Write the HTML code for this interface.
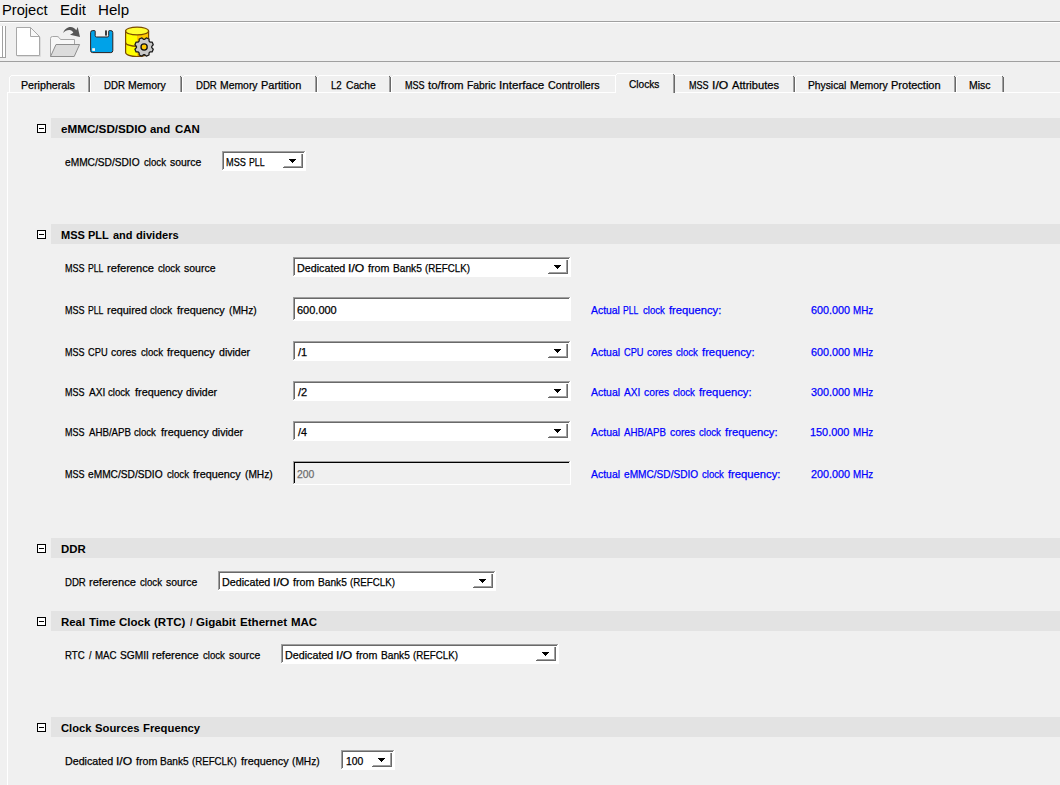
<!DOCTYPE html>
<html><head><meta charset="utf-8"><title>Clocks</title><style>
html,body{margin:0;padding:0}
body{width:1060px;height:785px;background:#f0f0f0;position:relative;overflow:hidden;font-family:"Liberation Sans",sans-serif;color:#000}
div,span,svg{position:absolute}
.tx{left:0;top:0}
.tx span{white-space:pre;transform-origin:0 0;display:block}
.r{-webkit-text-stroke:0.25px}
.m{font:14.5px/18px "Liberation Sans",sans-serif;}
.r{font:11px/13px "Liberation Sans",sans-serif;}
.b{font:bold 11px/13px "Liberation Sans",sans-serif;}
.band{left:51px;width:1009px;height:20px;background:#e3e3e3}
.exp{left:37px;width:7px;height:7px;border:1px solid #000;background:#fff}
.exp i{position:absolute;left:1px;top:3px;width:5px;height:1px;background:#000}
.cb,.tf{box-sizing:border-box;background:
 linear-gradient(#a0a0a0,#a0a0a0) 0 0/calc(100% - 1px) 1px no-repeat,
 linear-gradient(#a0a0a0,#a0a0a0) 0 0/1px calc(100% - 1px) no-repeat,
 linear-gradient(var(--in),var(--in)) 1px 1px/calc(100% - 3px) 1px no-repeat,
 linear-gradient(var(--in),var(--in)) 1px 1px/1px calc(100% - 3px) no-repeat,
 linear-gradient(var(--hl),var(--hl)) 100% 0/1px 100% no-repeat,
 linear-gradient(var(--hl),var(--hl)) 0 100%/100% 1px no-repeat,
 var(--bg);--in:#696969;--bg:#fff;--hl:#fff}
.cb{height:20px}
.tf{height:24px}
.tf.dis{--in:#000;--bg:#f0f0f0}
.cb u{position:absolute;right:3px;top:2px;width:20px;height:15px;background:
 linear-gradient(#696969,#696969) 100% 1px/1px 14px no-repeat,
 linear-gradient(#696969,#696969) 0 100%/100% 1px no-repeat,
 linear-gradient(#a0a0a0,#a0a0a0) 18px 1px/1px 13px no-repeat,
 linear-gradient(#a0a0a0,#a0a0a0) 1px 13px/18px 1px no-repeat}
.cb u::after{content:"";position:absolute;left:6px;top:6px;width:7px;height:4px;background:
 linear-gradient(#000,#000) 0 0/7px 1px no-repeat,
 linear-gradient(#000,#000) 1px 1px/5px 1px no-repeat,
 linear-gradient(#000,#000) 2px 2px/3px 1px no-repeat,
 linear-gradient(#000,#000) 3px 3px/1px 1px no-repeat}
.tab{top:75px;height:17px}
.tab b{position:absolute;background:#fff}
.tab s{position:absolute;}
</style></head><body>
<div style="left:0;top:21px;width:1060px;height:1px;background:#a0a0a0"></div>
<div style="left:0;top:22px;width:1060px;height:1px;background:#fff"></div>
<div style="left:0;top:61px;width:1060px;height:1px;background:#a0a0a0"></div>
<div style="left:0;top:26px;width:3px;height:32px;background:#fff;box-sizing:border-box;border-right:1px solid #a0a0a0;border-bottom:1px solid #a0a0a0"></div>
<div style="left:3px;top:26px;width:3px;height:32px;background:#fff;box-sizing:border-box;border-right:1px solid #a0a0a0;border-bottom:1px solid #a0a0a0"></div>
<svg style="left:0;top:0" width="170" height="62" viewBox="0 0 170 62">
<defs><linearGradient id="dbg" x1="0" x2="1" y1="0" y2="0"><stop offset="0" stop-color="#ffff00"/><stop offset="0.5" stop-color="#ffff00"/><stop offset="0.5" stop-color="#ffc800"/><stop offset="1" stop-color="#ffc800"/></linearGradient></defs>
<g fill="none" stroke-linejoin="round">
<path d="M17.5,28.5H31.5L40.5,37.5V56.5H17.5Z" stroke="#dcdcdc" stroke-linejoin="miter"/>
<path d="M16.5,27.5H30.5L39.5,36.5V55.5H16.5Z" fill="#fff" stroke="#a8a8a8" stroke-linejoin="miter"/>
<path d="M30.5,27.5V36.5H39.5Z" fill="#f9f9f9" stroke="#a8a8a8" stroke-linejoin="miter"/>
<path d="M50.5,56.5V38.5Q50.5,36.5 52.5,36.5H57Q58.2,36.5 59,37.5L60.5,39.5H74.5V44.5" fill="#f7f7f7" stroke="#a6a6a6"/>
<path d="M50.5,56.5L56,44.5H79.6L74.2,56.5Z" fill="#dcdcdc" stroke="#8e8e8e"/>
<path d="M63.1,32.9C64.4,29.6 67.4,26.9 70.6,27C73,27.1 75,28.4 76.3,30.2L77.7,27L80,37L70,34.7L73.3,32.7C72.5,31.1 71,30.1 69.5,30C67,29.9 64.8,31.2 63.1,32.9Z" fill="#565656" stroke="none"/>
<path d="M92.6,30.6H94.6Q95.2,30.6 95.2,31.2V35.6Q95.2,37 96.6,37H107.3Q108.7,37 108.7,35.6V31.2Q108.7,30.6 109.3,30.6H110.8Q112.8,30.6 112.8,32.6V50.6Q112.8,52.6 110.8,52.6H92.6Q90.6,52.6 90.6,50.6V32.6Q90.6,30.6 92.6,30.6Z" fill="#00a2e8" stroke="#2a2020" stroke-width="1"/>
<rect x="105.2" y="30.4" width="1.6" height="5.2" fill="#111" stroke="none"/>
<rect x="92.2" y="48.2" width="2.8" height="2.7" fill="#fff4ee" stroke="none"/>
<path d="M125.6,31V52.6A11.5,3.9 0 0 0 148.6,52.6V31Z" fill="url(#dbg)" stroke="#7a4a00" stroke-width="1.2"/>
<path d="M125.6,42.4A11.5,3.9 0 0 0 148.6,42.4" stroke="#7a4a00" stroke-width="1.2"/>
<ellipse cx="137.1" cy="31" rx="11.5" ry="3.9" fill="#ffff30" stroke="#7a4a00" stroke-width="1.2"/>
<path d="M151.77,47.66 L153.24,49.19 L152.11,51.91 L149.99,51.95 L149.05,52.89 L149.01,55.01 L146.29,56.14 L144.76,54.67 L143.44,54.67 L141.91,56.14 L139.19,55.01 L139.15,52.89 L138.21,51.95 L136.09,51.91 L134.96,49.19 L136.43,47.66 L136.43,46.34 L134.96,44.81 L136.09,42.09 L138.21,42.05 L139.15,41.11 L139.19,38.99 L141.91,37.86 L143.44,39.33 L144.76,39.33 L146.29,37.86 L149.01,38.99 L149.05,41.11 L149.99,42.05 L152.11,42.09 L153.24,44.81 L151.77,46.34Z" fill="#c8c8c8" stroke="#1c1c1c" stroke-width="1.3"/>
<circle cx="144.1" cy="47" r="3.1" fill="#ffc800" stroke="#111" stroke-width="1.3"/>
</g></svg>
<div class="tab" style="left:9px;top:75px;width:81px;height:17px"><b style="left:0;top:2px;width:1px;height:15px"></b><b style="left:1px;top:1px;width:1px;height:1px"></b><b style="left:2px;top:0;width:77px;height:1px"></b><s style="left:79px;top:2px;width:1px;height:15px;background:#a0a0a0"></s><s style="left:80px;top:2px;width:1px;height:15px;background:#696969"></s><s style="left:79px;top:1px;width:1px;height:1px;background:#696969"></s></div>
<div class="tab" style="left:90px;top:75px;width:92px;height:17px"><b style="left:0;top:2px;width:1px;height:15px"></b><b style="left:1px;top:1px;width:1px;height:1px"></b><b style="left:2px;top:0;width:88px;height:1px"></b><s style="left:90px;top:2px;width:1px;height:15px;background:#a0a0a0"></s><s style="left:91px;top:2px;width:1px;height:15px;background:#696969"></s><s style="left:90px;top:1px;width:1px;height:1px;background:#696969"></s></div>
<div class="tab" style="left:182px;top:75px;width:135px;height:17px"><b style="left:0;top:2px;width:1px;height:15px"></b><b style="left:1px;top:1px;width:1px;height:1px"></b><b style="left:2px;top:0;width:131px;height:1px"></b><s style="left:133px;top:2px;width:1px;height:15px;background:#a0a0a0"></s><s style="left:134px;top:2px;width:1px;height:15px;background:#696969"></s><s style="left:133px;top:1px;width:1px;height:1px;background:#696969"></s></div>
<div class="tab" style="left:317px;top:75px;width:74px;height:17px"><b style="left:0;top:2px;width:1px;height:15px"></b><b style="left:1px;top:1px;width:1px;height:1px"></b><b style="left:2px;top:0;width:70px;height:1px"></b><s style="left:72px;top:2px;width:1px;height:15px;background:#a0a0a0"></s><s style="left:73px;top:2px;width:1px;height:15px;background:#696969"></s><s style="left:72px;top:1px;width:1px;height:1px;background:#696969"></s></div>
<div class="tab" style="left:391px;top:75px;width:226px;height:17px"><b style="left:0;top:2px;width:1px;height:15px"></b><b style="left:1px;top:1px;width:1px;height:1px"></b><b style="left:2px;top:0;width:222px;height:1px"></b><s style="left:224px;top:2px;width:1px;height:15px;background:#a0a0a0"></s><s style="left:225px;top:2px;width:1px;height:15px;background:#696969"></s><s style="left:224px;top:1px;width:1px;height:1px;background:#696969"></s></div>
<div class="tab" style="left:673px;top:75px;width:122px;height:17px"><b style="left:0;top:2px;width:1px;height:15px"></b><b style="left:1px;top:1px;width:1px;height:1px"></b><b style="left:2px;top:0;width:118px;height:1px"></b><s style="left:120px;top:2px;width:1px;height:15px;background:#a0a0a0"></s><s style="left:121px;top:2px;width:1px;height:15px;background:#696969"></s><s style="left:120px;top:1px;width:1px;height:1px;background:#696969"></s></div>
<div class="tab" style="left:795px;top:75px;width:161px;height:17px"><b style="left:0;top:2px;width:1px;height:15px"></b><b style="left:1px;top:1px;width:1px;height:1px"></b><b style="left:2px;top:0;width:157px;height:1px"></b><s style="left:159px;top:2px;width:1px;height:15px;background:#a0a0a0"></s><s style="left:160px;top:2px;width:1px;height:15px;background:#696969"></s><s style="left:159px;top:1px;width:1px;height:1px;background:#696969"></s></div>
<div class="tab" style="left:956px;top:75px;width:48px;height:17px"><b style="left:0;top:2px;width:1px;height:15px"></b><b style="left:1px;top:1px;width:1px;height:1px"></b><b style="left:2px;top:0;width:44px;height:1px"></b><s style="left:46px;top:2px;width:1px;height:15px;background:#a0a0a0"></s><s style="left:47px;top:2px;width:1px;height:15px;background:#696969"></s><s style="left:46px;top:1px;width:1px;height:1px;background:#696969"></s></div>
<div style="left:7px;top:92px;width:1053px;height:1px;background:#fff"></div>
<div style="left:7px;top:92px;width:1px;height:693px;background:#fff"></div>
<div style="left:615px;top:73px;width:60px;height:20px;background:#f0f0f0"></div>
<div class="tab" style="left:615px;top:73px;width:60px;height:20px"><b style="left:0;top:2px;width:1px;height:18px"></b><b style="left:1px;top:1px;width:1px;height:1px"></b><b style="left:2px;top:0;width:56px;height:1px"></b><s style="left:58px;top:2px;width:1px;height:18px;background:#a0a0a0"></s><s style="left:59px;top:2px;width:1px;height:18px;background:#696969"></s><s style="left:58px;top:1px;width:1px;height:1px;background:#696969"></s></div>
<div class="band" style="top:118px"></div>
<div class="exp" style="top:124px"><i></i></div>
<div class="band" style="top:224px"></div>
<div class="exp" style="top:230px"><i></i></div>
<div class="band" style="top:538px"></div>
<div class="exp" style="top:544px"><i></i></div>
<div class="band" style="top:611px"></div>
<div class="exp" style="top:617px"><i></i></div>
<div class="band" style="top:717px"></div>
<div class="exp" style="top:723px"><i></i></div>
<div class="cb" style="left:222px;top:151px;width:84px"><u></u></div>
<div class="cb" style="left:293px;top:257px;width:278px"><u></u></div>
<div class="cb" style="left:293px;top:341px;width:278px"><u></u></div>
<div class="cb" style="left:293px;top:381px;width:278px"><u></u></div>
<div class="cb" style="left:293px;top:421px;width:278px"><u></u></div>
<div class="cb" style="left:218px;top:571px;width:278px"><u></u></div>
<div class="cb" style="left:281px;top:644px;width:278px"><u></u></div>
<div class="cb" style="left:341px;top:750px;width:54px"><u></u></div>
<div class="tf" style="left:293px;top:297px;width:278px"></div>
<div class="tf dis" style="left:293px;top:461px;width:278px"></div>
<div class="tx"><span class="m" style="left:1.93px;top:1px;transform:scaleX(1.0126)">Project</span></div>
<div class="tx"><span class="m" style="left:59.80px;top:1px;transform:scaleX(1.0370)">Edit</span></div>
<div class="tx"><span class="m" style="left:98.00px;top:1px;transform:scaleX(1.0429)">Help</span></div>
<div class="tx"><span class="r" style="left:20.65px;top:79px;transform:scaleX(0.9692)">Peripherals</span></div>
<div class="tx"><span class="r" style="left:104.03px;top:79px;transform:scaleX(0.8773)">DDR</span> <span class="r" style="left:128.24px;top:79px;transform:scaleX(0.9503)">Memory</span></div>
<div class="tx"><span class="r" style="left:195.84px;top:79px;transform:scaleX(0.8722)">DDR</span> <span class="r" style="left:219.91px;top:79px;transform:scaleX(0.9449)">Memory</span> <span class="r" style="left:261.10px;top:79px;transform:scaleX(0.9968)">Partition</span></div>
<div class="tx"><span class="r" style="left:331.13px;top:79px;transform:scaleX(0.8772)">L2</span> <span class="r" style="left:345.63px;top:79px;transform:scaleX(0.9329)">Cache</span></div>
<div class="tx"><span class="r" style="left:404.58px;top:79px;transform:scaleX(0.8243)">MSS</span> <span class="r" style="left:428.35px;top:79px;transform:scaleX(1.0389)">to/from</span> <span class="r" style="left:466.96px;top:79px;transform:scaleX(0.9402)">Fabric</span> <span class="r" style="left:498.97px;top:79px;transform:scaleX(1.0572)">Interface</span> <span class="r" style="left:547.92px;top:79px;transform:scaleX(0.9722)">Controllers</span></div>
<div class="tx"><span class="r" style="left:629.34px;top:78px;transform:scaleX(0.9214)">Clocks</span></div>
<div class="tx"><span class="r" style="left:689.18px;top:79px;transform:scaleX(0.8244)">MSS</span> <span class="r" style="left:711.97px;top:79px;transform:scaleX(1.1061)">I/O</span> <span class="r" style="left:732.23px;top:79px;transform:scaleX(1.0140)">Attributes</span></div>
<div class="tx"><span class="r" style="left:808.48px;top:79px;transform:scaleX(0.9346)">Physical</span> <span class="r" style="left:849.91px;top:79px;transform:scaleX(0.9496)">Memory</span> <span class="r" style="left:891.31px;top:79px;transform:scaleX(1.0009)">Protection</span></div>
<div class="tx"><span class="r" style="left:969.37px;top:79px;transform:scaleX(0.9497)">Misc</span></div>
<div class="tx"><span class="b" style="left:60.90px;top:123px;transform:scaleX(1.0613)">eMMC/SD/SDIO</span> <span class="b" style="left:150.42px;top:123px;transform:scaleX(1.0364)">and</span> <span class="b" style="left:174.60px;top:123px;transform:scaleX(1.0423)">CAN</span></div>
<div class="tx"><span class="b" style="left:60.55px;top:229px;transform:scaleX(1.0018)">MSS</span> <span class="b" style="left:88.22px;top:229px;transform:scaleX(0.9979)">PLL</span> <span class="b" style="left:112.72px;top:229px;transform:scaleX(0.9959)">and</span> <span class="b" style="left:135.97px;top:229px;transform:scaleX(1.0138)">dividers</span></div>
<div class="tx"><span class="b" style="left:60.52px;top:543px;transform:scaleX(1.0374)">DDR</span></div>
<div class="tx"><span class="b" style="left:60.52px;top:616px;transform:scaleX(1.0395)">Real</span> <span class="b" style="left:88.58px;top:616px;transform:scaleX(1.0431)">Time</span> <span class="b" style="left:119.04px;top:616px;transform:scaleX(1.0467)">Clock</span> <span class="b" style="left:154.28px;top:616px;transform:scaleX(1.0463)">(RTC)</span> <span class="b" style="left:189.51px;top:616px;transform:scaleX(0.8489)">/</span> <span class="b" style="left:196.02px;top:616px;transform:scaleX(1.0510)">Gigabit</span> <span class="b" style="left:239.72px;top:616px;transform:scaleX(1.0534)">Ethernet</span> <span class="b" style="left:290.61px;top:616px;transform:scaleX(1.0421)">MAC</span></div>
<div class="tx"><span class="b" style="left:60.79px;top:722px;transform:scaleX(1.0174)">Clock</span> <span class="b" style="left:95.06px;top:722px;transform:scaleX(1.0238)">Sources</span> <span class="b" style="left:143.31px;top:722px;transform:scaleX(1.0269)">Frequency</span></div>
<div class="tx"><span class="r" style="left:65.44px;top:156px;transform:scaleX(0.9246)">eMMC/SD/SDIO</span> <span class="r" style="left:143.69px;top:156px;transform:scaleX(0.8761)">clock</span> <span class="r" style="left:169.85px;top:156px;transform:scaleX(0.9492)">source</span></div>
<div class="tx"><span class="r" style="left:64.98px;top:262px;transform:scaleX(0.8234)">MSS</span> <span class="r" style="left:88.16px;top:262px;transform:scaleX(0.7892)">PLL</span> <span class="r" style="left:107.22px;top:262px;transform:scaleX(1.0101)">reference</span> <span class="r" style="left:157.88px;top:262px;transform:scaleX(0.8795)">clock</span> <span class="r" style="left:184.13px;top:262px;transform:scaleX(0.9528)">source</span></div>
<div class="tx"><span class="r" style="left:64.98px;top:304px;transform:scaleX(0.8200)">MSS</span> <span class="r" style="left:88.07px;top:304px;transform:scaleX(0.7858)">PLL</span> <span class="r" style="left:107.07px;top:304px;transform:scaleX(0.9904)">required</span> <span class="r" style="left:150.49px;top:304px;transform:scaleX(0.8758)">clock</span> <span class="r" style="left:176.87px;top:304px;transform:scaleX(0.9876)">frequency</span> <span class="r" style="left:228.55px;top:304px;transform:scaleX(0.9248)">(MHz)</span></div>
<div class="tx"><span class="r" style="left:64.98px;top:346px;transform:scaleX(0.8205)">MSS</span> <span class="r" style="left:88.35px;top:346px;transform:scaleX(0.8440)">CPU</span> <span class="r" style="left:111.38px;top:346px;transform:scaleX(0.9416)">cores</span> <span class="r" style="left:140.51px;top:346px;transform:scaleX(0.8764)">clock</span> <span class="r" style="left:166.91px;top:346px;transform:scaleX(0.9882)">frequency</span> <span class="r" style="left:218.72px;top:346px;transform:scaleX(0.9607)">divider</span></div>
<div class="tx"><span class="r" style="left:64.98px;top:386px;transform:scaleX(0.8194)">MSS</span> <span class="r" style="left:88.75px;top:386px;transform:scaleX(0.9213)">AXI</span> <span class="r" style="left:108.35px;top:386px;transform:scaleX(0.8752)">clock</span> <span class="r" style="left:134.71px;top:386px;transform:scaleX(0.9869)">frequency</span> <span class="r" style="left:186.46px;top:386px;transform:scaleX(0.9594)">divider</span></div>
<div class="tx"><span class="r" style="left:64.98px;top:426px;transform:scaleX(0.8192)">MSS</span> <span class="r" style="left:88.74px;top:426px;transform:scaleX(0.8800)">AHB/APB</span> <span class="r" style="left:134.38px;top:426px;transform:scaleX(0.8750)">clock</span> <span class="r" style="left:160.74px;top:426px;transform:scaleX(0.9866)">frequency</span> <span class="r" style="left:212.47px;top:426px;transform:scaleX(0.9591)">divider</span></div>
<div class="tx"><span class="r" style="left:64.98px;top:468px;transform:scaleX(0.8202)">MSS</span> <span class="r" style="left:88.30px;top:468px;transform:scaleX(0.9245)">eMMC/SD/SDIO</span> <span class="r" style="left:166.56px;top:468px;transform:scaleX(0.8761)">clock</span> <span class="r" style="left:192.95px;top:468px;transform:scaleX(0.9878)">frequency</span> <span class="r" style="left:244.64px;top:468px;transform:scaleX(0.9250)">(MHz)</span></div>
<div class="tx"><span class="r" style="left:64.94px;top:576px;transform:scaleX(0.8711)">DDR</span> <span class="r" style="left:89.05px;top:576px;transform:scaleX(1.0080)">reference</span> <span class="r" style="left:139.60px;top:576px;transform:scaleX(0.8776)">clock</span> <span class="r" style="left:165.80px;top:576px;transform:scaleX(0.9507)">source</span></div>
<div class="tx"><span class="r" style="left:64.94px;top:649px;transform:scaleX(0.8729)">RTC</span> <span class="r" style="left:88.75px;top:649px;transform:scaleX(0.8021)">/</span> <span class="r" style="left:94.99px;top:649px;transform:scaleX(0.8840)">MAC</span> <span class="r" style="left:120.35px;top:649px;transform:scaleX(0.9268)">SGMII</span> <span class="r" style="left:152.13px;top:649px;transform:scaleX(1.0054)">reference</span> <span class="r" style="left:202.54px;top:649px;transform:scaleX(0.8753)">clock</span> <span class="r" style="left:228.68px;top:649px;transform:scaleX(0.9483)">source</span></div>
<div class="tx"><span class="r" style="left:64.85px;top:755px;transform:scaleX(0.9707)">Dedicated</span> <span class="r" style="left:115.68px;top:755px;transform:scaleX(1.0989)">I/O</span> <span class="r" style="left:135.69px;top:755px;transform:scaleX(0.9672)">from</span> <span class="r" style="left:160.05px;top:755px;transform:scaleX(0.9186)">Bank5</span> <span class="r" style="left:192.35px;top:755px;transform:scaleX(0.8804)">(REFCLK)</span> <span class="r" style="left:240.85px;top:755px;transform:scaleX(0.9865)">frequency</span> <span class="r" style="left:292.48px;top:755px;transform:scaleX(0.9238)">(MHz)</span></div>
<div class="tx"><span class="r" style="left:225.97px;top:156px;transform:scaleX(0.8333)">MSS</span> <span class="r" style="left:249.42px;top:156px;transform:scaleX(0.7987)">PLL</span></div>
<div class="tx"><span class="r" style="left:296.95px;top:262px;transform:scaleX(0.9755)">Dedicated</span> <span class="r" style="left:348.02px;top:262px;transform:scaleX(1.1045)">I/O</span> <span class="r" style="left:368.13px;top:262px;transform:scaleX(0.9721)">from</span> <span class="r" style="left:392.60px;top:262px;transform:scaleX(0.9232)">Bank5</span> <span class="r" style="left:425.06px;top:262px;transform:scaleX(0.8847)">(REFCLK)</span></div>
<div class="tx"><span class="r" style="left:296.55px;top:304px;transform:scaleX(0.9994)">600.000</span></div>
<div class="tx"><span class="r" style="left:298.30px;top:346px;transform:scaleX(0.9971)">/1</span></div>
<div class="tx"><span class="r" style="left:298.30px;top:386px;transform:scaleX(0.9971)">/2</span></div>
<div class="tx"><span class="r" style="left:298.30px;top:426px;transform:scaleX(0.9690)">/4</span></div>
<div class="tx" style="color:#6d6d6d"><span class="r" style="left:296.83px;top:468px;transform:scaleX(0.9439)">200</span></div>
<div class="tx"><span class="r" style="left:221.95px;top:576px;transform:scaleX(0.9755)">Dedicated</span> <span class="r" style="left:273.02px;top:576px;transform:scaleX(1.1045)">I/O</span> <span class="r" style="left:293.13px;top:576px;transform:scaleX(0.9721)">from</span> <span class="r" style="left:317.60px;top:576px;transform:scaleX(0.9232)">Bank5</span> <span class="r" style="left:350.06px;top:576px;transform:scaleX(0.8847)">(REFCLK)</span></div>
<div class="tx"><span class="r" style="left:284.95px;top:649px;transform:scaleX(0.9755)">Dedicated</span> <span class="r" style="left:336.02px;top:649px;transform:scaleX(1.1045)">I/O</span> <span class="r" style="left:356.13px;top:649px;transform:scaleX(0.9721)">from</span> <span class="r" style="left:380.60px;top:649px;transform:scaleX(0.9232)">Bank5</span> <span class="r" style="left:413.06px;top:649px;transform:scaleX(0.8847)">(REFCLK)</span></div>
<div class="tx"><span class="r" style="left:345.68px;top:755px;transform:scaleX(0.9412)">100</span></div>
<div class="tx" style="color:#0000ff"><span class="r" style="left:591.30px;top:304px;transform:scaleX(0.9461)">Actual</span> <span class="r" style="left:623.47px;top:304px;transform:scaleX(0.7799)">PLL</span> <span class="r" style="left:642.63px;top:304px;transform:scaleX(0.8693)">clock</span> <span class="r" style="left:668.81px;top:304px;transform:scaleX(1.0181)">frequency:</span></div>
<div class="tx" style="color:#0000ff"><span class="r" style="left:591.30px;top:346px;transform:scaleX(0.9506)">Actual</span> <span class="r" style="left:623.88px;top:346px;transform:scaleX(0.8411)">CPU</span> <span class="r" style="left:646.83px;top:346px;transform:scaleX(0.9385)">cores</span> <span class="r" style="left:675.86px;top:346px;transform:scaleX(0.8735)">clock</span> <span class="r" style="left:702.17px;top:346px;transform:scaleX(1.0229)">frequency:</span></div>
<div class="tx" style="color:#0000ff"><span class="r" style="left:591.30px;top:386px;transform:scaleX(0.9500)">Actual</span> <span class="r" style="left:624.28px;top:386px;transform:scaleX(0.9188)">AXI</span> <span class="r" style="left:643.80px;top:386px;transform:scaleX(0.9379)">cores</span> <span class="r" style="left:672.81px;top:386px;transform:scaleX(0.8729)">clock</span> <span class="r" style="left:699.10px;top:386px;transform:scaleX(1.0222)">frequency:</span></div>
<div class="tx" style="color:#0000ff"><span class="r" style="left:591.30px;top:426px;transform:scaleX(0.9517)">Actual</span> <span class="r" style="left:624.34px;top:426px;transform:scaleX(0.8795)">AHB/APB</span> <span class="r" style="left:669.92px;top:426px;transform:scaleX(0.9395)">cores</span> <span class="r" style="left:698.98px;top:426px;transform:scaleX(0.8744)">clock</span> <span class="r" style="left:725.32px;top:426px;transform:scaleX(1.0240)">frequency:</span></div>
<div class="tx" style="color:#0000ff"><span class="r" style="left:591.30px;top:468px;transform:scaleX(0.9491)">Actual</span> <span class="r" style="left:623.79px;top:468px;transform:scaleX(0.9203)">eMMC/SD/SDIO</span> <span class="r" style="left:701.69px;top:468px;transform:scaleX(0.8720)">clock</span> <span class="r" style="left:727.95px;top:468px;transform:scaleX(1.0212)">frequency:</span></div>
<div class="tx" style="color:#0000ff"><span class="r" style="left:810.61px;top:304px;transform:scaleX(0.9813)">600.000</span> <span class="r" style="left:853.15px;top:304px;transform:scaleX(0.8887)">MHz</span></div>
<div class="tx" style="color:#0000ff"><span class="r" style="left:810.61px;top:346px;transform:scaleX(0.9813)">600.000</span> <span class="r" style="left:853.15px;top:346px;transform:scaleX(0.8887)">MHz</span></div>
<div class="tx" style="color:#0000ff"><span class="r" style="left:810.61px;top:386px;transform:scaleX(0.9813)">300.000</span> <span class="r" style="left:853.15px;top:386px;transform:scaleX(0.8887)">MHz</span></div>
<div class="tx" style="color:#0000ff"><span class="r" style="left:810.23px;top:426px;transform:scaleX(0.9908)">150.000</span> <span class="r" style="left:853.15px;top:426px;transform:scaleX(0.8887)">MHz</span></div>
<div class="tx" style="color:#0000ff"><span class="r" style="left:810.61px;top:468px;transform:scaleX(0.9813)">200.000</span> <span class="r" style="left:853.15px;top:468px;transform:scaleX(0.8887)">MHz</span></div>
</body></html>
